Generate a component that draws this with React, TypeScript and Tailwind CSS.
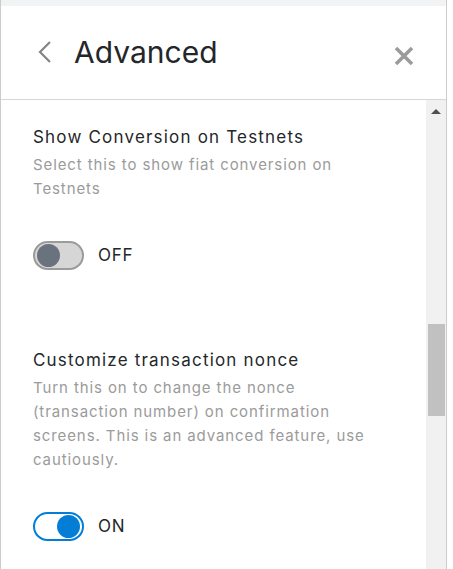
import React from "react";

const font = { fontFamily: "Inter, 'Open Sans', sans-serif" };

function Toggle({ on, label }: { on: boolean; label: string }) {
  return (
    <div className="flex items-center gap-[14px]">
      <div
        className={
          on
            ? "flex h-[29px] w-[51px] items-center justify-end rounded-full border-2 border-[#037dd6] bg-white px-[2px]"
            : "flex h-[29px] w-[51px] items-center justify-start rounded-full border-2 border-[#9b9b9b] bg-[#d6d6d6] px-[2px]"
        }
      >
        <div
          className={
            on
              ? "h-[23px] w-[23px] rounded-full bg-[#037dd6]"
              : "h-[23px] w-[23px] rounded-full bg-[#6a737d]"
          }
        />
      </div>
      <span className="text-[17px] tracking-[0.04em] text-[#24272a]">{label}</span>
    </div>
  );
}

function Setting({
  title,
  desc,
  on,
  className,
}: {
  title: string;
  desc: string;
  on: boolean;
  className?: string;
}) {
  return (
    <div className={className}>
      <div className="text-[17px] leading-[24px] tracking-[0.07em] text-[#24272a]">{title}</div>
      <p className="mt-[4px] w-[356px] text-[15px] leading-[24px] tracking-[0.06em] text-[#9b9b9b]">
        {desc}
      </p>
      <div className="mt-[40px]">
        <Toggle on={on} label={on ? "ON" : "OFF"} />
      </div>
    </div>
  );
}

export default function App() {
  return (
    <div className="flex h-[569px] w-[453px] overflow-hidden bg-white" style={font}>
      <div className="flex w-[447px] flex-col border-x border-[#cccccc]">
        <div className="h-[6px] bg-[#f2f3f4]" />
        <div className="flex h-[94px] items-center border-b border-[#d6d6d6] pb-[2px]">
          <svg width="16" height="24" viewBox="0 0 16 24" className="ml-[36px]">
            <path d="M13 2 L3 12 L13 22" fill="none" stroke="#848484" strokeWidth="2.2" />
          </svg>
          <h1 className="ml-[21px] text-[30px] leading-none text-[#24272a]">Advanced</h1>
          <svg width="20" height="20" viewBox="0 0 20 20" className="ml-auto mr-[32px] mt-[8px]">
            <path d="M2 2 L18 18 M18 2 L2 18" stroke="#9b9b9b" strokeWidth="3.6" />
          </svg>
        </div>
        <div className="flex min-h-0 flex-1">
          <div className="flex-1 pl-[32px] pt-[25px]">
            <Setting
              title="Show Conversion on Testnets"
              desc="Select this to show fiat conversion on Testnets"
              on={false}
            />
            <Setting
              className="mt-[78px]"
              title="Customize transaction nonce"
              desc="Turn this on to change the nonce (transaction number) on confirmation screens. This is an advanced feature, use cautiously."
              on={true}
            />
          </div>
          <div className="flex w-[20px] flex-col items-center bg-[#f1f1f1]">
            <svg width="10" height="6" viewBox="0 0 10 6" className="mt-[9px]">
              <path d="M0 5 L5 0 L10 5 Z" fill="#505050" />
            </svg>
            <div className="mt-[209px] h-[92px] w-[17px] bg-[#c1c1c1]" />
          </div>
        </div>
      </div>
      <div className="flex-1 bg-white" />
    </div>
  );
}
